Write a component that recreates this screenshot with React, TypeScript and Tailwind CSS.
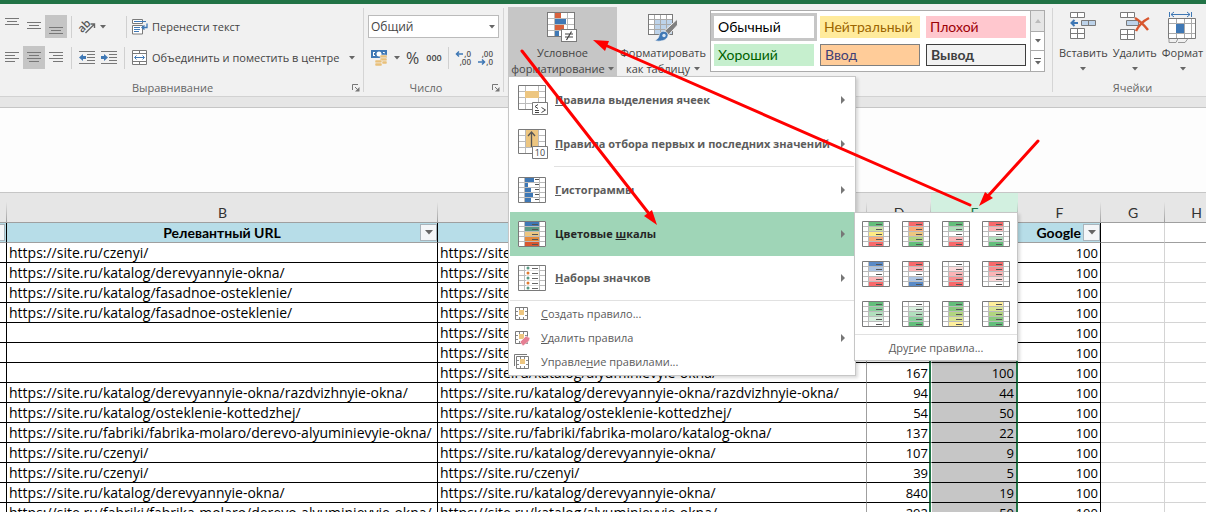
import type { ReactNode } from 'react';

const GREY = '#7a7a7a';
const BLUE = '#3f78b5';

type IconProps = { w: number; h: number; children: ReactNode; className?: string };

const Icon = ({ w, h, children, className = '' }: IconProps) => (
  <svg width={w} height={h} viewBox={`0 0 ${w} ${h}`} fill="none" aria-hidden="true" className={`block shrink-0 overflow-visible ${className}`}>
    {children}
  </svg>
);

const Caret = ({ className = '' }: { className?: string }) => (
  <Icon w={6} h={4} className={className}>
    <path d="M0 0h6L3 3.5z" fill="#666" />
  </Icon>
);

const Submark = () => (
  <Icon w={4} h={8} className="ml-auto mr-[9px]">
    <path d="M0 0v8l4-4z" fill="#777" />
  </Icon>
);

const Lines = ({ rows }: { rows: [number, number, number][] }) => (
  <Icon w={14} h={17}>
    <g fill="#777">
      {rows.map(([x, y, len]) => (
        <rect key={y} x={x} y={y} width={len} height="1" />
      ))}
    </g>
  </Icon>
);

const Indent = ({ right = false }: { right?: boolean }) => (
  <Icon w={16} h={13}>
    <path d="M0 .5h16M8 3.5h8M8 6.5h8M8 9.5h8M0 12.5h16" stroke="#777" />
    <path d={right ? 'M0 5h3V3l4 3.5L3 10V8H0z' : 'M7 5H4V3L0 6.5 4 10V8h3z'} fill={BLUE} />
  </Icon>
);

const Orientation = () => (
  <Icon w={17} h={17}>
    <text x="-1" y="12" fontSize="11" fontWeight="600" fill="#555" className="font-['Open_Sans']" transform="rotate(-45 5 9)">ab</text>
    <path d="M6.500 15l8.500-8.500M11.500 6h4v4" stroke="#666" strokeWidth="1.400" />
  </Icon>
);

const Launcher = () => (
  <button aria-label="Параметры" className="shrink-0">
    <Icon w={8} h={8}>
      <path d="M.5 6V.5H6" stroke="#777" />
      <path d="M3 3l3 3" stroke="#777" />
      <path d="M7.500 3v4.500H3z" fill="#777" />
    </Icon>
  </button>
);

const WrapIcon = () => (
  <Icon w={16} h={16}>
    <path d="M.5.5h10v4H.5zM.5 6.500h10v8.500H.5z" fill="#fff" stroke={GREY} />
    <path d="M2 2.500h12M2 8.500h6M2 10.500h6M2 12.500h5" stroke={BLUE} />
    <path d="M15 4.500v4h-4M12.500 6.500l-2.500 2 2.500 2" stroke={BLUE} strokeWidth="1.300" />
  </Icon>
);

const MergeIcon = () => (
  <Icon w={16} h={16}>
    <path d="M.5.5h14v14H.5zM.5 3.500h14M.5 11.500h14M7.500.5v3M7.500 11.500v3" fill="#fff" stroke={GREY} />
    <path d="M3 7.500h9M4.500 5.500l-2 2 2 2M10.500 5.500l2 2-2 2" stroke={BLUE} />
  </Icon>
);

const MoneyIcon = () => (
  <Icon w={17} h={16}>
    <path d="M0 0h16v8H0z" fill={BLUE} />
    <path d="M2 2h2v1H3v2h1v1H2zM14 2h-2v1h1v2h1v1h-2z" fill="#fff" />
    <circle cx="8" cy="4" r="2.500" fill="#fff" />
    <g fill="#e9c07a" stroke="#f0f0f0" strokeWidth=".5">
      <rect x="9" y="5" width="7" height="3" rx="1" />
      <rect x="9" y="8" width="7" height="3" rx="1" />
      <rect x="4" y="10" width="7" height="3" rx="1" />
      <rect x="4" y="13" width="7" height="3" rx="1" />
      <rect x="11" y="11" width="5" height="3" rx="1" />
    </g>
  </Icon>
);

const Decimals = ({ more = false }: { more?: boolean }) => (
  <Icon w={15} h={16}>
    <g fill="#555" fontSize="8" fontWeight="600" className="font-['Open_Sans']">
      <text x="15" y="7" textAnchor="end">{more ? ',0' : ',00'}</text>
      <text x="15" y="15" textAnchor="end">{more ? ',00' : ',0'}</text>
    </g>
    <path d={more ? 'M0 4h7M3 1.500L.5 4 3 6.500' : 'M0 12h7M4 9.500l2.500 2.500L4 14.500'} stroke={BLUE} strokeWidth="1.500" />
  </Icon>
);

const gridLines = 'M0 6.500h28M0 12.500h28M0 18.500h28M7.500 0v25M20.500 0v25';

const CondIcon = () => (
  <Icon w={31} h={31}>
    <rect x=".5" y=".5" width="27" height="24" fill="#fff" />
    <path d={gridLines} stroke="#bbb" />
    <path d="M8 1h6v5H8zM8 13h9v5H8z" fill="#d8613c" />
    <path d="M8 7h11v5H8zM8 19h4v5H8z" fill={BLUE} />
    <rect x=".5" y=".5" width="27" height="24" stroke={GREY} />
    <rect x="14.500" y="17.500" width="15" height="12" fill="#fff" stroke={GREY} />
    <path d="M18 22h8M18 25h8M24.500 19.500l-5 8.500" stroke="#444" strokeWidth="1.200" />
  </Icon>
);

const TableIcon = () => (
  <Icon w={31} h={30}>
    <rect x=".5" y="2.500" width="24" height="20" fill="#fff" />
    <path d="M7 8h17v14H7z" fill="#bdd3ea" />
    <path d="M0 7.500h25M0 12.500h25M0 17.500h25M6.500 2v20M12.500 2v20M18.500 2v20" stroke="#aaa" />
    <rect x=".5" y="2.500" width="24" height="20" stroke={GREY} />
    <path d="M29.500 7v6l-9 10-4-4z" fill="#808080" stroke="#f0f0f0" />
    <path d="M18.500 20c-4-2-7 0-7.500 4-.5 2-2 4-4.500 4.500 5 1.500 12 .5 13.500-4.500.4-1.500-.5-3-1.500-4z" fill={BLUE} stroke="#f0f0f0" strokeWidth=".7" />
    <circle cx="16" cy="23.500" r="1.700" fill="#d5e4f3" />
  </Icon>
);

const InsertIcon = () => (
  <Icon w={27} h={29}>
    <path d="M.5.5h14v5H.5zM7.500.5v5M.5 16.500h14v10H.5zM7.500 16.500v10M.5 21.500h14" fill="#fff" stroke={GREY} />
    <path d="M11.500 8.500h14v5h-14zM18.500 8.500v5" fill="#bdd3ea" stroke={GREY} />
    <path d="M8 11H2M4.500 8L1.500 11l3 3" stroke={BLUE} strokeWidth="2" />
  </Icon>
);

const DeleteIcon = () => (
  <Icon w={30} h={29}>
    <path d="M.5.5h14v5H.5zM7.500.5v5M.5 17.500h14v10H.5zM7.500 17.500v10M.5 22.500h14" fill="#fff" stroke={GREY} />
    <path d="M6.500 8.500h12v5h-12z" fill="#bdd3ea" stroke={GREY} />
    <path d="M15 6c5 3 9 7 13 12M29 6c-6 3-10 7-13 13" stroke="#d8572f" strokeWidth="2.500" />
  </Icon>
);

const FormatIcon = () => (
  <Icon w={29} h={32}>
    <path d="M1.500 0v5M23.500 0v5M3 2.500h19M6 0L3 2.500 6 5M19 0l3 2.500L19 5" stroke={BLUE} />
    <path d="M.5 6.500h27v20H.5z" fill="#fff" />
    <path d="M1 11.500h26M1 21.500h26M8.500 7v19M16.500 7v19M23.500 7v19" stroke="#aaa" />
    <path d="M.5 6.500h27v20H.5z" stroke={GREY} />
    <path d="M8 12h8v9H8z" fill={BLUE} />
    <path d="M1 27v3.500h7l2-4M10 30.500h7l3-4" stroke="#999" />
  </Icon>
);

const RuleIcon = ({ top = false }: { top?: boolean }) => (
  <Icon w={30} h={30}>
    <path d="M.5.5h27v24H.5z" fill="#fff" />
    <path d={gridLines} stroke="#bbb" />
    {top ? <path d="M8 1h12v17H8z" fill="#edc680" /> : <path d="M7 6h14v7H7z" fill="#edc680" />}
    <path d="M.5.5h27v24H.5z" stroke={GREY} />
    {top && <path d="M13.500 18V3M10 7l3.500-4L17 7" stroke="#555" strokeWidth="1.300" />}
    <path d="M14.500 17.500h15v12h-15z" fill="#fff" stroke={GREY} />
    {top ? (
      <text x="22" y="27" textAnchor="middle" fontSize="9" fill="#444" className="font-['Open_Sans'] font-medium">10</text>
    ) : (
      <path d="M20 19.500l-3 2 3 2M17 25.500h4M17 27.500h4M23.500 22.500l4 2.500-4 2.500" stroke="#444" />
    )}
  </Icon>
);

const HistogramIcon = () => (
  <Icon w={28} h={26}>
    <path d="M0 0h28v26H0z" fill="#fff" />
    <path d="M0 5.500h28M0 10.500h28M0 15.500h28M0 20.500h28M6.500 0v26M21.500 0v26" stroke="#bbb" />
    <path d="M7 1h9v4H7zM7 6h3v4H7zM7 11h6v4H7zM7 16h8v4H7zM7 21h6v4H7z" fill={BLUE} />
    <path d="M17 2.500h4M17 7.500h4M17 12.500h4M17 17.500h4M17 22.500h4" stroke="#555" />
    <path d="M.5.5h27v25H.5z" stroke={GREY} />
  </Icon>
);

const ScaleIcon = ({ colors }: { colors: string[] }) => (
  <Icon w={28} h={26}>
    <path d="M0 0h28v26H0z" fill="#fff" />
    <path d="M0 5.500h28M0 10.500h28M0 15.500h28M0 20.500h28M6.500 0v26M21.500 0v26" stroke="#bbb" />
    {colors.map((c, i) => (
      <rect key={i} x="7" y={i * 5 + 1} width="14" height="4" fill={c} />
    ))}
    <path d="M14 3.500h6M14 8.500h6M14 13.500h6M14 18.500h6M14 23.500h6" stroke="#555" />
    <path d="M.5.5h27v25H.5z" stroke={GREY} />
  </Icon>
);

const SetsIcon = () => (
  <Icon w={28} h={26}>
    <path d="M0 0h28v26H0z" fill="#fff" />
    <path d="M0 5.500h28M0 10.500h28M0 15.500h28M0 20.500h28M6.500 0v26M21.500 0v26" stroke="#bbb" />
    <path d="M8 1h13v24H8z" fill="#fff" opacity=".6" />
    {['#5a9a84', '#e07a2f', '#5a9a84', '#e07a2f', '#5a9a84'].map((c, i) => (
      <circle key={i} cx="10" cy={i * 5 + 3} r="1.500" fill={c} />
    ))}
    <path d="M14 3.500h6M14 8.500h6M14 13.500h6M14 18.500h6M14 23.500h6" stroke="#666" />
    <path d="M.5.5h27v25H.5z" stroke={GREY} />
  </Icon>
);

const SmallRuleIcon = ({ kind }: { kind: 'new' | 'clear' | 'manage' }) => (
  <Icon w={16} h={16}>
    {kind === 'manage' && <path d="M.5 12V.5H13" stroke={GREY} />}
    <g transform={kind === 'manage' ? 'translate(2 2)' : 'translate(1 1)'}>
      <path d="M.5.5h12v12H.5z" fill="#fff" stroke={GREY} />
      <path d="M1 4.500h2M1 8.500h2M10 4.500h2M10 8.500h2M4.500 1v2M8.500 1v2M4.500 10v2M8.500 10v2" stroke="#888" />
      <path d="M4 3h5v5H4z" fill="#edc680" />
    </g>
    {kind === 'clear' && <path d="M6 12l6-6 4 2-1 3-6 5z" fill="#e57f93" stroke="#fff" strokeWidth=".5" />}
  </Icon>
);

const Tool = ({ children, active = false, label }: { children: ReactNode; active?: boolean; label: string }) => (
  <button
    aria-label={label}
    className={`flex h-[23px] w-[22px] shrink-0 items-center justify-center ${active ? 'bg-[#c5c5c5]' : ''}`}
  >
    {children}
  </button>
);

const Divider = () => <div className="h-[22px] w-px shrink-0 bg-[#d0d0d0]" />;

const GroupLabel = ({ children }: { children: ReactNode }) => (
  <div className="flex h-2 items-center pr-[3px]">
    <span className="flex-1 pr-2 text-center text-[#666]">{children}</span>
    <Launcher />
  </div>
);

const AlignmentGroup = () => (
  <section className="flex w-[364px] shrink-0 flex-col border-r border-[#d5d5d5] pl-px">
    <div className="flex flex-1 flex-col gap-2 pt-[7px]">
      <div className="flex h-[23px] items-center">
        <Tool label="По верхнему краю"><Lines rows={[[0, 0, 14], [2, 3, 10], [0, 6, 14]]} /></Tool>
        <Tool label="По середине"><Lines rows={[[0, 4, 14], [2, 7, 10], [0, 10, 14]]} /></Tool>
        <Tool label="По нижнему краю" active><Lines rows={[[0, 9, 14], [2, 12, 10], [0, 15, 14]]} /></Tool>
        <div className="ml-1"><Divider /></div>
        <button aria-label="Ориентация" className="ml-[7px] flex items-center gap-1">
          <Orientation />
          <Caret />
        </button>
        <div className="ml-5"><Divider /></div>
        <button className="ml-[5px] flex items-center gap-1 whitespace-nowrap">
          <WrapIcon />
          Перенести текст
        </button>
      </div>
      <div className="flex h-[23px] items-center">
        <Tool label="По левому краю"><Lines rows={[[0, 3, 14], [0, 6, 10], [0, 9, 14], [0, 12, 10]]} /></Tool>
        <Tool label="По центру" active><Lines rows={[[0, 3, 14], [2, 6, 10], [0, 9, 14], [2, 12, 10]]} /></Tool>
        <Tool label="По правому краю"><Lines rows={[[0, 3, 14], [4, 6, 10], [0, 9, 14], [4, 12, 10]]} /></Tool>
        <div className="ml-1"><Divider /></div>
        <button aria-label="Уменьшить отступ" className="ml-[7px]"><Indent /></button>
        <button aria-label="Увеличить отступ" className="ml-[6px]"><Indent right /></button>
        <div className="ml-[7px]"><Divider /></div>
        <button className="ml-[7px] flex items-center gap-1 whitespace-nowrap">
          <MergeIcon />
          Объединить и поместить в центре
        </button>
        <Caret className="ml-auto mr-2" />
      </div>
    </div>
    <GroupLabel>Выравнивание</GroupLabel>
  </section>
);

const NumberGroup = () => (
  <section className="flex w-[140px] shrink-0 flex-col border-r border-[#d5d5d5] pl-1">
    <div className="flex flex-1 flex-col gap-2 pt-[7px]">
      <div className="relative mr-1 flex h-[23px] items-center">
        <select aria-label="Числовой формат" className="h-full w-full appearance-none border border-[#bbb] bg-white px-[2px] text-xs outline-none">
          <option>Общий</option>
        </select>
        <Caret className="absolute right-1" />
      </div>
      <div className="flex h-[23px] items-center">
        <button aria-label="Финансовый формат" className="ml-[3px] flex items-center gap-[6px]">
          <MoneyIcon />
          <Caret />
        </button>
        <button className="ml-[6px] text-base leading-4">%</button>
        <button className="ml-[7px] text-[9px] font-semibold leading-4">000</button>
        <div className="ml-[6px]"><Divider /></div>
        <button aria-label="Увеличить разрядность" className="ml-[7px]"><Decimals more /></button>
        <button aria-label="Уменьшить разрядность" className="ml-[7px]"><Decimals /></button>
      </div>
    </div>
    <GroupLabel>Число</GroupLabel>
  </section>
);

const BigItem = ({ icon, children }: { icon: ReactNode; children: ReactNode }) => (
  <button className="flex h-11 w-full items-center whitespace-nowrap pl-2 text-left font-bold text-[#5c5c5c]">
    <span className="w-[37px] shrink-0">{icon}</span>
    {children}
    <Submark />
  </button>
);

const SmallItem = ({ kind, children, sub = false }: { kind: 'new' | 'clear' | 'manage'; children: ReactNode; sub?: boolean }) => (
  <button className="flex h-6 w-full items-center whitespace-nowrap pl-1 text-left text-[#5c5c5c]">
    <span className="w-[27px] shrink-0"><SmallRuleIcon kind={kind} /></span>
    {children}
    {sub && <Submark />}
  </button>
);

const G = '#63be7b';
const R = '#f8696b';
const W = '#ffffff';

const scales = [
  [G, '#cbe2a5', '#ffeb84', '#fbaa77', R],
  [R, '#fbaa77', '#edc680', '#b1d580', G],
  [G, '#b1dfbd', W, '#fbb4b6', R],
  [R, '#fbb4b6', W, '#b1dfbd', G],
  ['#5a8ac6', '#acc4e3', W, '#fbb4b6', R],
  [R, '#fbb4b6', W, '#acc4e3', '#5a8ac6'],
  [W, '#fcdadb', '#fbb4b6', '#fa8f91', R],
  [R, '#fa8f91', '#fbb4b6', '#fcdadb', W],
  [G, '#8acf9c', '#b1dfbd', '#d8efde', W],
  [W, '#d8efde', '#b1dfbd', '#8acf9c', G],
  [G, '#8aca7e', '#b1d580', '#d8e593', '#ffef9c'],
  ['#ffef9c', '#d8e593', '#b1d580', '#8aca7e', G],
];

const ScalesMenu = () => (
  <div className="absolute left-[344px] top-0 w-[164px] border border-[#c6c6c6] bg-white shadow-[2px_2px_3px_rgba(0,0,0,0.15)]">
    <div className="grid grid-cols-4 gap-x-3 gap-y-[14px] px-[7px] pb-[7px] pt-2">
      {scales.map((colors, i) => (
        <button key={i} aria-label={`Цветовая шкала ${i + 1}`}>
          <ScaleIcon colors={colors} />
        </button>
      ))}
    </div>
    <button className="block h-[26px] w-full border-t border-[#e1e1e1] text-center text-[#5c5c5c]">
      Дру<u>г</u>ие правила...
    </button>
  </div>
);

const CondMenu = () => (
  <div className="absolute left-0 top-full z-10 w-[348px] border border-[#c6c6c6] bg-white p-px shadow-[2px_2px_3px_rgba(0,0,0,0.15)]">
    <BigItem icon={<RuleIcon />}><span><u>П</u>равила выделения ячеек</span></BigItem>
    <BigItem icon={<RuleIcon top />}><span><u>П</u>равила отбора первых и последних значений</span></BigItem>
    <div className="mb-px ml-11 h-px bg-[#e1e1e1]" />
    <BigItem icon={<HistogramIcon />}><span><u>Г</u>истограммы</span></BigItem>
    <div className="relative bg-[#9fd5b7] [&>button]:text-[#262626]">
      <BigItem icon={<ScaleIcon colors={['#3f78b5', '#5a9a84', '#edc680', '#e58a3c', '#d8572f']} />}>
        <span>Цветовые <u>ш</u>калы</span>
      </BigItem>
      <ScalesMenu />
    </div>
    <BigItem icon={<SetsIcon />}><span><u>Н</u>аборы значков</span></BigItem>
    <div className="mb-px h-px bg-[#e1e1e1]" />
    <SmallItem kind="new"><span><u>С</u>оздать правило...</span></SmallItem>
    <SmallItem kind="clear" sub><span><u>У</u>далить правила</span></SmallItem>
    <SmallItem kind="manage"><span>Управле<u>н</u>ие правилами...</span></SmallItem>
  </div>
);

const styles = [
  { name: 'Обычный', look: 'bg-white text-black outline-3 outline-[#c6c6c6]' },
  { name: 'Нейтральный', look: 'bg-[#ffeb9c] text-[#9c6500]' },
  { name: 'Плохой', look: 'bg-[#ffc7ce] text-[#9c0006]' },
  { name: 'Хороший', look: 'bg-[#c6efce] text-[#006100]' },
  { name: 'Ввод', look: 'border border-[#7f7f7f] bg-[#ffcc99] text-[#3f3f76]' },
  { name: 'Вывод', look: 'border border-[#3f3f3f] bg-[#f2f2f2] font-bold text-[#3f3f3f]' },
];

const StylesGroup = () => (
  <section className="flex w-[549px] shrink-0 items-start border-r border-[#d5d5d5] pl-1">
    <div className="relative mt-[-1px] w-[109px] shrink-0">
      <button className="flex h-[69px] w-full flex-col items-center bg-[#c6c6c6] pt-[5px]">
        <CondIcon />
        <span className="mt-[2px] leading-4">Условное</span>
        <span className="flex items-center gap-[3px] leading-4">форматирование<Caret /></span>
      </button>
      <CondMenu />
    </div>
    <button className="ml-[2px] flex w-[88px] shrink-0 flex-col items-center pt-[4px]">
      <TableIcon />
      <span className="mt-[3px] leading-4">Форматировать</span>
      <span className="flex items-center gap-1 leading-4">как таблицу<Caret /></span>
    </button>
    <div className="ml-[3px] mt-[2px] flex h-[62px] border border-[#ababab] bg-white">
      <div className="grid grid-cols-3 gap-x-[6px] gap-y-[6px] py-[5px] pl-[3px] pr-1 font-['Lato'] text-sm">
        {styles.map((s) => (
          <button key={s.name} className={`h-[22px] w-[100px] px-1 text-left leading-5 ${s.look}`}>{s.name}</button>
        ))}
      </div>
      <div className="flex w-[14px] flex-col border-l border-[#ababab]">
        <button aria-label="Вверх" className="flex h-5 items-center justify-center bg-[#e6e6e6]">
          <Icon w={6} h={4}><path d="M0 4h6L3 0z" fill="#bbb" /></Icon>
        </button>
        <button aria-label="Вниз" className="flex h-5 items-center justify-center border-y border-[#ababab]"><Caret /></button>
        <button aria-label="Дополнительно" className="flex flex-1 flex-col items-center justify-center gap-[2px]">
          <span className="h-px w-[7px] bg-[#666]" />
          <Caret />
        </button>
      </div>
    </div>
  </section>
);

const CellButton = ({ icon, children }: { icon: ReactNode; children: ReactNode }) => (
  <button className="flex flex-col items-center">
    <span className="flex h-[33px] items-start">{icon}</span>
    <span className="leading-4">{children}</span>
    <Caret className="mt-[6px]" />
  </button>
);

const CellsGroup = () => (
  <section className="flex min-w-[153px] flex-1 flex-col pl-[6px]">
    <div className="flex flex-1 gap-[5px] whitespace-nowrap pt-[4px]">
      <CellButton icon={<InsertIcon />}>Вставить</CellButton>
      <CellButton icon={<DeleteIcon />}>Удалить</CellButton>
      <CellButton icon={<FormatIcon />}>Формат</CellButton>
    </div>
    <div className="flex h-2 items-center justify-center text-[#666]">Ячейки</div>
  </section>
);

const FilterButton = () => (
  <button aria-label="Фильтр" className="flex h-[17px] w-[17px] shrink-0 items-center justify-center border border-[#a9b4bb] bg-[#f4f6f8]">
    <Icon w={8} h={5}><path d="M0 0h8L4 4.500z" fill="#666" /></Icon>
  </button>
);

const rows = [
  ['https://site.ru/czenyi/', 'https://site.ru/czenyi/', '', ''],
  ['https://site.ru/katalog/derevyannyie-okna/', 'https://site.ru/czenyi/', '', ''],
  ['https://site.ru/katalog/fasadnoe-osteklenie/', 'https://site.ru/czenyi/', '', ''],
  ['https://site.ru/katalog/fasadnoe-osteklenie/', 'https://site.ru/czenyi/', '', ''],
  ['', 'https://site.ru/czenyi/', '', ''],
  ['', 'https://site.ru/czenyi/', '', ''],
  ['', 'https://site.ru/katalog/alyuminievyie-okna/', '167', '100'],
  ['https://site.ru/katalog/derevyannyie-okna/razdvizhnyie-okna/', 'https://site.ru/katalog/derevyannyie-okna/razdvizhnyie-okna/', '94', '44'],
  ['https://site.ru/katalog/osteklenie-kottedzhej/', 'https://site.ru/katalog/osteklenie-kottedzhej/', '54', '50'],
  ['https://site.ru/fabriki/fabrika-molaro/derevo-alyuminievyie-okna/', 'https://site.ru/fabriki/fabrika-molaro/katalog-okna/', '137', '22'],
  ['https://site.ru/czenyi/', 'https://site.ru/katalog/derevyannyie-okna/', '107', '9'],
  ['https://site.ru/czenyi/', 'https://site.ru/czenyi/', '39', '5'],
  ['https://site.ru/katalog/derevyannyie-okna/', 'https://site.ru/katalog/derevyannyie-okna/', '840', '19'],
  ['https://site.ru/fabriki/fabrika-molaro/derevo-alyuminievyie-okna/', 'https://site.ru/katalog/alyuminievyie-okna/', '292', '50'],
];

const letters = ['', 'B', 'C', 'D', 'E', 'F', 'G', 'H'];
const HEAD = 'border-b border-[#9f9f9f] bg-[#b7dde8] p-0 font-bold';

const Sheet = () => (
  <table className="w-full table-fixed border-separate border-spacing-0 font-['Open_Sans'] text-[13px] leading-[18px] text-black">
    <colgroup>
      <col className="w-[7px]" />
      <col className="w-[431px]" />
      <col className="w-[429px]" />
      <col className="w-[64px]" />
      <col className="w-[87px]" />
      <col className="w-[83px]" />
      <col className="w-[64px]" />
      <col />
    </colgroup>
    <thead className="font-['Lato'] text-sm leading-[19px]">
      <tr className="h-[30px] bg-[#e6e6e6]">
        {letters.map((l, i) => (
          <th
            key={i}
            className={`border-b border-[#9f9f9f] bg-[linear-gradient(to_bottom,transparent_30%,#9f9f9f)] bg-[length:1px_100%] bg-right bg-no-repeat p-0 pt-[10px] font-normal last:bg-none last:pl-[22px] ${l === 'E' ? 'bg-[#d2f0e0] text-[#217346]' : 'text-[#333]'}`}
          >
            {l}
          </th>
        ))}
      </tr>
      <tr className="h-5">
        <td className={`${HEAD} border-r border-r-black`}>
          <div className="h-[17px] w-[5px] border-y border-r border-[#a9b4bb] bg-[#f4f6f8]" />
        </td>
        <th className={`${HEAD} border-r border-r-black`}>
          <div className="flex items-center pl-px">
            <span className="flex-1 pl-4">Релевантный URL</span>
            <FilterButton />
          </div>
        </th>
        <td className={`${HEAD} border-r border-r-[#9f9f9f]`} />
        <td className={`${HEAD} border-r border-r-black`} />
        <td className={`${HEAD} border-r border-r-black`} />
        <th className={`${HEAD} border-r border-r-black`}>
          <div className="flex items-center justify-end gap-[2px]">
            Google
            <FilterButton />
          </div>
        </th>
        <td className="border-b border-r border-b-[#9f9f9f] border-r-[#d4d4d4]" />
        <td className="border-b border-b-[#9f9f9f]" />
      </tr>
    </thead>
    <tbody>
      {rows.map(([b, c, d, e], i) => (
        <tr
          key={i}
          className="h-5 whitespace-nowrap [&>td]:border-b [&>td]:border-r [&>td]:border-black [&>td]:p-0 [&>td]:pt-px"
        >
          <td />
          <td><div className="pl-[2px] text-sm leading-[18px]">{b}</div></td>
          <td className="border-r-[#9f9f9f]!"><div className="pl-[2px] text-sm leading-[18px]">{c}</div></td>
          <td className="border-r-2! border-r-[#217346]! text-right"><div className="pr-px">{d}</div></td>
          <td className="border-l border-r-2! border-l-white! border-r-[#217346]! bg-[#c6c6c6] text-right">
            <div className="pr-[2px]">{e}</div>
          </td>
          <td className="text-right"><div className="pr-[2px]">100</div></td>
          <td className="border-[#d4d4d4]!" />
          <td className="border-r-0! border-[#d4d4d4]!" />
        </tr>
      ))}
    </tbody>
  </table>
);

const Arrows = () => (
  <svg width="1206" height="512" viewBox="0 0 1206 512" aria-hidden="true" className="pointer-events-none absolute left-0 top-0 z-20">
    <path d="M522 51L650 215M970 205L605 45M1038 141L988 196" stroke="#f00" strokeWidth="3" strokeLinecap="round" />
    <path d="M657 225l-13-9 8-6zM593 40l16 1-4 10zM979 206l6-14 8 6z" fill="#f00" />
  </svg>
);

const App = () => {
  return (
    <div className="relative h-screen overflow-hidden bg-white font-['Open_Sans'] text-[11px] leading-4 text-[#444]">
      <div className="h-1 bg-[#217346]" />
      <header className="flex h-[93px] border-b border-[#d2d2d2] bg-[#f1f1f1] pb-1 pt-1">
        <AlignmentGroup />
        <NumberGroup />
        <StylesGroup />
        <CellsGroup />
      </header>
      <div className="h-[11px] border-b border-[#c6c6c6] bg-[#e6e6e6]" />
      <div className="h-[85px] border-b border-[#c6c6c6] bg-[#fdfdfd]" />
      <Sheet />
      <Arrows />
    </div>
  );
};

export default App;
